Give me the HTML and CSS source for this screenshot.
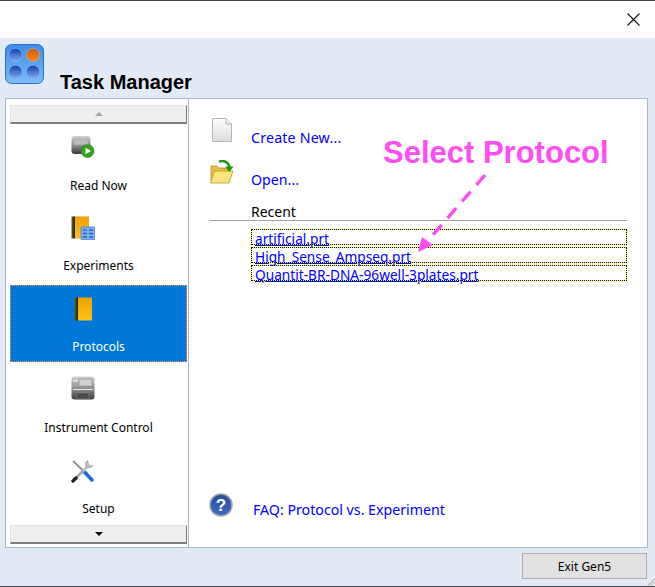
FILE: index.html
```html
<!DOCTYPE html>
<html lang="en">
<head>
  <meta charset="UTF-8" />
  <title>Task Manager</title>
  <link rel="stylesheet" href="styles.css">
</head>
<body>

<div class="window">
  <div class="titlebar">
    <svg class="close" width="13" height="13" viewBox="0 0 13 13"><path d="M0.5 0.5L12.5 12.5M12.5 0.5L0.5 12.5" stroke="#111" stroke-width="1.1" fill="none"/></svg>
  </div>

  <div class="header">
    <svg class="logo" width="39" height="40" viewBox="0 0 39 40">
      <defs>
        <linearGradient id="logoBg" x1="0" y1="0" x2="0" y2="1"><stop offset="0" stop-color="#3a8cec"/><stop offset="1" stop-color="#7cbcf6"/></linearGradient>
        <linearGradient id="dotBlue" x1="0" y1="0" x2="0" y2="1"><stop offset="0" stop-color="#0f3dae"/><stop offset="1" stop-color="#86aef0"/></linearGradient>
        <linearGradient id="dotOrange" x1="0" y1="0" x2="0" y2="1"><stop offset="0" stop-color="#c85a06"/><stop offset="1" stop-color="#ff8a1c"/></linearGradient>
      </defs>
      <rect x="0.5" y="0.5" width="38" height="39" rx="6" fill="url(#logoBg)" stroke="#2a72cc"/>
      <circle cx="10.5" cy="11" r="6.8" fill="url(#dotBlue)" stroke="#8cc0f6" stroke-width="0.6"/>
      <circle cx="28" cy="11" r="6.8" fill="url(#dotOrange)" stroke="#8cc0f6" stroke-width="0.6"/>
      <circle cx="10.5" cy="28" r="6.8" fill="url(#dotBlue)" stroke="#8cc0f6" stroke-width="0.6"/>
      <circle cx="28" cy="28" r="6.8" fill="url(#dotBlue)" stroke="#8cc0f6" stroke-width="0.6"/>
    </svg>
    <h1 class="app-title">Task Manager</h1>
  </div>

  <div class="panel">
    <div class="sidebar">
      <div class="scroll-btn"><span class="tri-up"></span></div>

      <div class="nav-item first">
        <svg class="nav-icon" width="24" height="24" viewBox="0 0 24 24">
          <defs>
            <linearGradient id="devBody" x1="0" y1="0" x2="0" y2="1"><stop offset="0" stop-color="#d2d2d2"/><stop offset="0.55" stop-color="#8a8a8a"/><stop offset="1" stop-color="#3c3c3c"/></linearGradient>
          </defs>
          <rect x="0.5" y="0" width="19" height="18" rx="3" fill="url(#devBody)"/>
          <rect x="3" y="3" width="14" height="6" fill="#bdbdbd" stroke="#9a9a9a" stroke-width="0.5"/>
          <circle cx="16.5" cy="15" r="6.5" fill="#3aa020" stroke="#2a7a16" stroke-width="0.6"/>
          <path d="M14.5 11.8L20 15L14.5 18.2Z" fill="#fff"/>
        </svg>
        <span class="nav-label">Read Now</span>
      </div>

      <div class="nav-item">
        <svg class="nav-icon" width="24" height="24" viewBox="0 0 24 24">
          <defs>
            <linearGradient id="bookFace" x1="0" y1="0" x2="0" y2="1"><stop offset="0" stop-color="#f0a000"/><stop offset="1" stop-color="#ffc21c"/></linearGradient>
            <linearGradient id="bookSpine" x1="0" y1="0" x2="1" y2="0"><stop offset="0" stop-color="#6a6212"/><stop offset="1" stop-color="#111"/></linearGradient>
          </defs>
          <rect x="0.5" y="0.5" width="4" height="22" fill="url(#bookSpine)"/>
          <rect x="4" y="0.5" width="14" height="22" fill="url(#bookFace)"/>
          <rect x="10" y="11" width="14" height="13" rx="1" fill="#7fb0ee" stroke="#3b78c8" stroke-width="0.7"/>
          <path d="M12 14h4M18 14h4M12 17.5h4M18 17.5h4M12 21h4M18 21h4" stroke="#2a62c0" stroke-width="1.6"/>
        </svg>
        <span class="nav-label">Experiments</span>
      </div>

      <div class="nav-item selected">
        <svg class="nav-icon" width="24" height="24" viewBox="0 0 24 24">
          <rect x="3.5" y="0.5" width="4" height="23" fill="url(#bookSpine)"/>
          <rect x="7" y="0.5" width="14" height="23" fill="url(#bookFace)"/>
        </svg>
        <span class="nav-label">Protocols</span>
      </div>

      <div class="nav-item instrument">
        <svg class="nav-icon" width="24" height="24" viewBox="0 0 24 24">
          <rect x="0.5" y="0.5" width="23" height="23" rx="3" fill="url(#devBody)"/>
          <rect x="8" y="3" width="13" height="7" fill="#d0d0d0" stroke="#8c8c8c" stroke-width="0.6"/>
          <rect x="2" y="4" width="5" height="1.5" fill="#eee"/>
          <rect x="2" y="13" width="20" height="1" fill="#eaeaea"/>
          <rect x="6" y="17" width="12" height="6" fill="#4a4a4a" stroke="#888" stroke-width="0.6"/>
        </svg>
        <span class="nav-label">Instrument Control</span>
      </div>

      <div class="nav-item last">
        <svg class="nav-icon" width="24" height="24" viewBox="0 0 24 24">
          <path d="M2 2L22 21" stroke="#8a8f96" stroke-width="1.8"/>
          <path d="M13.5 13L21 21" stroke="#1f6fd0" stroke-width="3.6" stroke-linecap="round"/>
          <path d="M12 12L4 20" stroke="#a8a8a8" stroke-width="2.6"/>
          <path d="M5 19L2 22" stroke="#222" stroke-width="3.4" stroke-linecap="round"/>
          <path d="M12 12L17 7" stroke="#c0c0c0" stroke-width="2.6"/>
          <path d="M16.5 1.5A5 5 0 0 0 15 8A5 5 0 0 0 22 6.5L19.5 7L17.5 5Z" fill="#c4c4c4" stroke="#888" stroke-width="0.5"/>
        </svg>
        <span class="nav-label">Setup</span>
      </div>

      <div class="scroll-btn"><span class="tri-down"></span></div>
    </div>

    <div class="content">
      <div class="action-row new-row">
        <svg class="doc-icon" width="20" height="24" viewBox="0 0 20 24">
          <defs>
            <linearGradient id="docFill" x1="0" y1="0" x2="0" y2="1"><stop offset="0" stop-color="#fdfdfd"/><stop offset="1" stop-color="#dcdcdc"/></linearGradient>
          </defs>
          <path d="M0.5 0.5H14L19.5 6V23.5H0.5Z" fill="url(#docFill)" stroke="#b4b4b4"/>
          <path d="M14 0.5V6H19.5" fill="#eee" stroke="#b4b4b4"/>
        </svg>
        <a class="link">Create New...</a>
      </div>

      <div class="action-row open-row">
        <svg class="folder-icon" width="24" height="24" viewBox="0 0 24 24">
          <path d="M1 6H7L8.5 8H18V21H1Z" fill="#e9c046" stroke="#a98318" stroke-width="0.7"/>
          <path d="M4.5 11H23L19 23H0.5Z" fill="#fbe47e" stroke="#b08c1e" stroke-width="0.7"/>
          <path d="M9 1.5C14 0 18.5 2 19.5 7" stroke="#1f9612" stroke-width="2.4" fill="none"/>
          <path d="M15 6.5H23.5L19.5 12Z" fill="#1f9612"/>
        </svg>
        <a class="link">Open...</a>
      </div>

      <div class="recent-head">Recent</div>

      <ul class="recent-list">
        <li><a class="file-link">artificial.prt</a></li>
        <li><a class="file-link">High_Sense_Ampseq.prt</a></li>
        <li><a class="file-link">Quantit-BR-DNA-96well-3plates.prt</a></li>
      </ul>

      <div class="faq-row">
        <svg class="faq-icon" width="24" height="24" viewBox="0 0 24 24">
          <defs>
            <linearGradient id="faqFill" x1="0" y1="0" x2="0" y2="1"><stop offset="0" stop-color="#274a9c"/><stop offset="1" stop-color="#3f6cc4"/></linearGradient>
          </defs>
          <circle cx="12" cy="12" r="11" fill="url(#faqFill)" stroke="#a2a6ae" stroke-width="1.6"/>
          <text x="12" y="18" text-anchor="middle" class="faq-mark">?</text>
        </svg>
        <a class="link">FAQ: Protocol vs. Experiment</a>
      </div>

      <div class="callout">Select Protocol</div>
    </div>
  </div>

  <div class="footer">
    <button class="exit-btn">Exit Gen5</button>
  </div>

  <svg class="arrow" width="80" height="90" viewBox="0 0 80 90">
    <path d="M70 8L17 69" stroke="#ff4df5" stroke-width="3.4" stroke-dasharray="13 9" fill="none"/>
    <path d="M3 85L7 70L18 78Z" fill="#ff4df5"/>
  </svg>

  <svg class="grip" width="8" height="8" viewBox="0 0 8 8"><path d="M7.5 1L1 7.5M7.5 4L4 7.5" stroke="#9a9a9a" fill="none"/></svg>
</div>

</body>
</html>
```

FILE: styles.css
```css
* {
  box-sizing: border-box;
}

html, body {
  margin: 0;
  padding: 0;
}

body {
  font-family: "Noto Sans", "Liberation Sans", sans-serif;
  background: #e3eaf5;
  color: #000;
}

.window {
  position: relative;
  width: 655px;
  height: 587px;
  display: flex;
  flex-direction: column;
  background: #e3eaf5;
  border-top: 1px solid #444;
  border-bottom: 1px solid #444;
  overflow: hidden;
}

.titlebar {
  height: 37px;
  flex: none;
  background: #fff;
  display: flex;
  justify-content: flex-end;
  align-items: flex-start;
  padding: 12px 15px 0 0;
}

.header {
  height: 60px;
  flex: none;
  display: flex;
  align-items: flex-start;
  padding: 6px 0 0 5px;
}

.app-title {
  margin: 26px 0 0 16px;
  font-family: "Liberation Sans", Arial, sans-serif;
  font-size: 20px;
  font-weight: bold;
  line-height: 24px;
}

.panel {
  height: 450px;
  flex: none;
  margin: 0 7px 0 5px;
  display: flex;
  background: #fff;
  border: 1px solid #a5bacd;
}

.sidebar {
  width: 183px;
  flex: none;
  border-right: 1px solid #a5bacd;
  padding: 6px 1px 0 4px;
  display: flex;
  flex-direction: column;
}

.scroll-btn {
  height: 19px;
  flex: none;
  background: #efefef;
  border-top: 1px solid #e2e2e2;
  border-left: 1px solid #e2e2e2;
  border-right: 1px solid #777;
  border-bottom: 2px solid #808080;
  display: flex;
  align-items: center;
  justify-content: center;
}

.tri-up {
  border-left: 4px solid transparent;
  border-right: 4px solid transparent;
  border-bottom: 4px solid #a3a3a3;
}

.tri-down {
  border-left: 4px solid transparent;
  border-right: 4px solid transparent;
  border-top: 4px solid #000;
}

.nav-item {
  height: 77px;
  flex: none;
  margin-bottom: 4px;
  padding-top: 11px;
  display: flex;
  flex-direction: column;
  align-items: center;
  border: 1px dotted transparent;
}

.nav-item.first {
  margin-bottom: 3px;
}

.nav-item.last {
  margin-bottom: 1px;
}

.nav-item.selected {
  background: #0078d7;
  border-color: #ff9a2e;
  color: #fff;
}

.nav-item.instrument {
  padding-top: 9px;
}

.nav-item.instrument .nav-label {
  margin-top: 20px;
}

.nav-icon {
  display: block;
  margin-right: 32px;
  flex: none;
}

.nav-label {
  margin-top: 18px;
  font-size: 12px;
  line-height: 16px;
}

.content {
  position: relative;
  flex: 1;
  padding: 19px 20px 0 20px;
  display: flex;
  flex-direction: column;
}

.action-row {
  display: flex;
  align-items: flex-start;
}

.link {
  color: #0000ff;
  font-size: 14.2px;
  line-height: 20px;
}

.new-row {
  height: 42px;
  padding-left: 3px;
}

.new-row .link {
  margin: 10px 0 0 19px;
  letter-spacing: 0.2px;
}

.open-row {
  height: 40px;
  padding-left: 1px;
}

.open-row .link {
  margin: 10px 0 0 17px;
}

.recent-head {
  padding: 2px 0 0 42px;
  height: 21px;
  border-bottom: 1px solid #a0a0a0;
  font-size: 14px;
  line-height: 20px;
}

.recent-list {
  list-style: none;
  margin: 8px 0 0 42px;
  padding: 0;
}

.recent-list li {
  height: 16px;
  margin-bottom: 2px;
  padding-left: 3px;
  border: 1px dotted #000;
  background: linear-gradient(#fff, #fff) padding-box, #ff0 border-box;
  white-space: nowrap;
}

.file-link {
  display: block;
  color: #0000ff;
  font-size: 13.7px;
  line-height: 18px;
  text-decoration: underline;
}

.faq-row {
  display: flex;
  align-items: flex-start;
  margin-top: 210px;
}

.faq-row .link {
  margin: 7px 0 0 20px;
}

.faq-mark {
  font-family: "Liberation Sans", sans-serif;
  font-size: 17px;
  font-weight: bold;
  fill: #fff;
}

.callout {
  position: absolute;
  left: 194px;
  top: 36px;
  font-family: "Liberation Sans", Arial, sans-serif;
  font-size: 31px;
  font-weight: bold;
  line-height: 36px;
  color: #ff4df5;
  white-space: nowrap;
}

.footer {
  flex: 1;
  display: flex;
  justify-content: flex-end;
  padding: 5px 8px 0 0;
}

.exit-btn {
  width: 125px;
  height: 26px;
  background: #e1e1e1;
  border: 1px solid #adadad;
  font-family: "Noto Sans", "Liberation Sans", sans-serif;
  font-size: 12px;
  color: #000;
  padding: 0;
}

.arrow {
  position: absolute;
  left: 415px;
  top: 166px;
}

.grip {
  position: absolute;
  right: 0;
  bottom: 0;
}
```
